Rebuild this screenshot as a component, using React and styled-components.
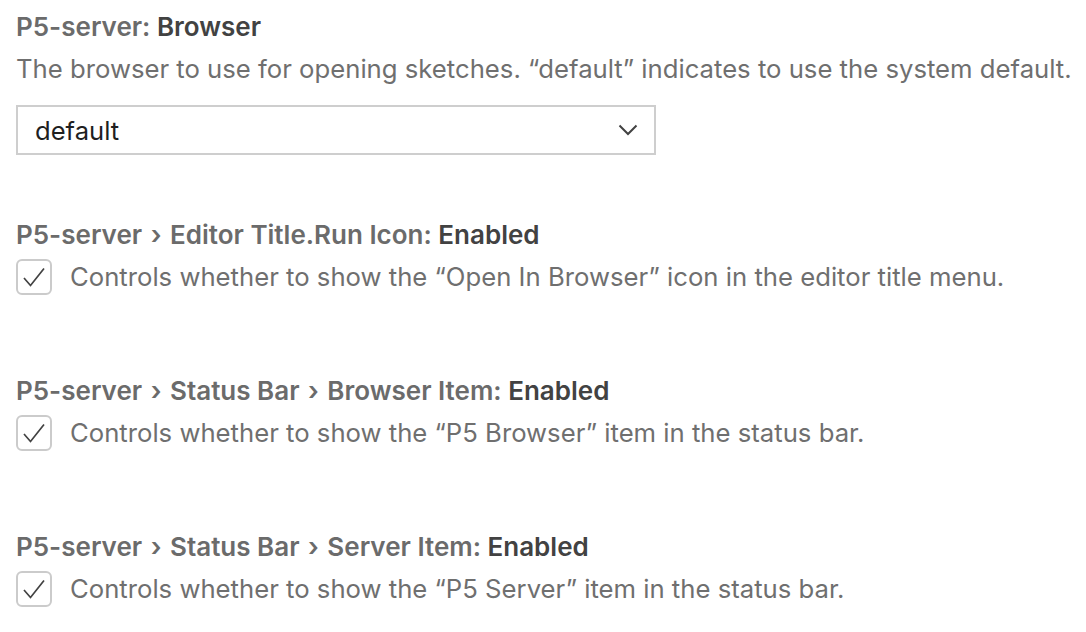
import React from "react";
import styled, { createGlobalStyle } from "styled-components";

const Global = createGlobalStyle`
  body {
    margin: 0;
    background: #ffffff;
    font-family: Inter, "Noto Sans", sans-serif;
  }
`;

const Page = styled.div`
  padding: 9px 16px 0 16px;
  height: 632px;
  box-sizing: border-box;
  overflow: hidden;
`;

const Setting = styled.div`
  padding-bottom: ${(p) => p.gap || 78}px;
`;

const Title = styled.div`
  font-size: 26px;
  line-height: 36px;
  font-weight: 600;
  color: #6b6b6b;
  white-space: nowrap;
  b {
    color: #424242;
    font-weight: 600;
  }
`;

const Sep = styled.span`
  margin: 0 2px;
`;

const Description = styled.div`
  margin-top: 6px;
  font-size: 25.7px;
  line-height: 36px;
  color: #6f6f6f;
  white-space: nowrap;
`;

const Select = styled.div`
  margin-top: 18px;
  width: 640px;
  height: 50px;
  box-sizing: border-box;
  border: 2px solid #cecece;
  display: flex;
  align-items: center;
  justify-content: space-between;
  padding: 0 16px 0 17px;
  font-size: 25.6px;
  color: #1f1f1f;
`;

const Row = styled.div`
  margin-top: 6px;
  display: flex;
  align-items: center;
  gap: 18px;
  height: 36px;
`;

const Box = styled.div`
  width: 36px;
  height: 36px;
  box-sizing: border-box;
  border: 2px solid #cbcbcb;
  border-radius: 6px;
  display: flex;
  align-items: center;
  justify-content: center;
  flex-shrink: 0;
`;

const RowText = styled.span`
  font-size: 25.7px;
  line-height: 36px;
  color: #6f6f6f;
  white-space: nowrap;
`;

const Chevron = () => (
  <svg width="20" height="12" viewBox="0 0 20 12" fill="none">
    <path d="M1.5 1.5 L10 10 L18.5 1.5" stroke="#424242" strokeWidth="2" />
  </svg>
);

const Check = () => (
  <svg width="26" height="26" viewBox="0 0 26 26" fill="none">
    <path d="M3 14 L9.5 21.5 L23 4.5" stroke="#424242" strokeWidth="1.7" />
  </svg>
);

const checkboxes = [
  {
    path: ["P5-server", "Editor Title.Run Icon"],
    name: "Enabled",
    text: "Controls whether to show the “Open In Browser” icon in the editor title menu.",
  },
  {
    path: ["P5-server", "Status Bar", "Browser Item"],
    name: "Enabled",
    text: "Controls whether to show the “P5 Browser” item in the status bar.",
  },
  {
    path: ["P5-server", "Status Bar", "Server Item"],
    name: "Enabled",
    text: "Controls whether to show the “P5 Server” item in the status bar.",
  },
];

export default function App() {
  return (
    <>
      <Global />
      <Page>
        <Setting gap={62}>
          <Title>
            P5-server: <b>Browser</b>
          </Title>
          <Description>
            The browser to use for opening sketches. “default” indicates to use the system default.
          </Description>
          <Select>
            default
            <Chevron />
          </Select>
        </Setting>
        {checkboxes.map((c) => (
          <Setting key={c.path.join()}>
            <Title>
              {c.path.map((p, i) => (
                <React.Fragment key={p}>
                  {i > 0 && <Sep> › </Sep>}
                  {p}
                </React.Fragment>
              ))}
              : <b>{c.name}</b>
            </Title>
            <Row>
              <Box>
                <Check />
              </Box>
              <RowText>{c.text}</RowText>
            </Row>
          </Setting>
        ))}
      </Page>
    </>
  );
}
